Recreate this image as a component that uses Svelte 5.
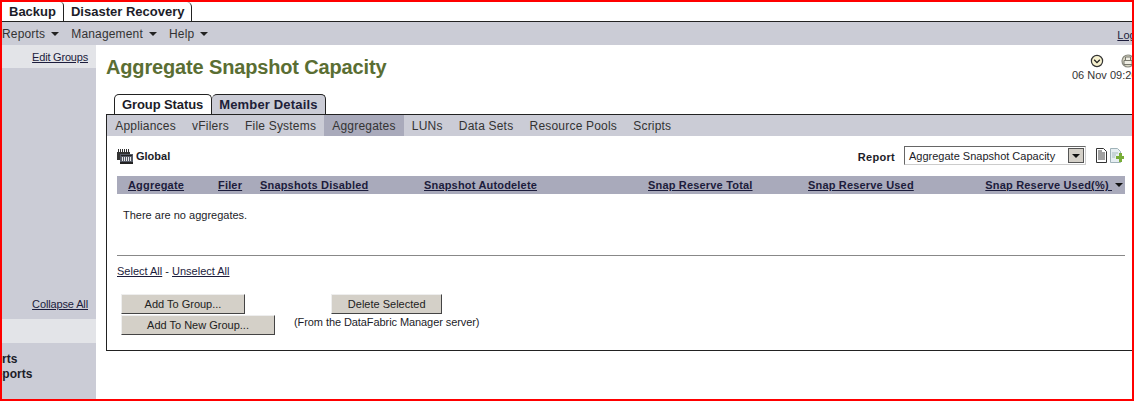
<script>
  const appTabs = ['Backup', 'Disaster Recovery'];
  const menus = ['Reports', 'Management', 'Help'];
  const subTabs = ['Appliances', 'vFilers', 'File Systems', 'Aggregates', 'LUNs', 'Data Sets', 'Resource Pools', 'Scripts'];
  const columns = [
    { label: 'Aggregate', width: 90 },
    { label: 'Filer', width: 42 },
    { label: 'Snapshots Disabled', width: 164 },
    { label: 'Snapshot Autodelete', width: 224 },
    { label: 'Snap Reserve Total', width: 160 },
    { label: 'Snap Reserve Used', width: 176 },
    { label: 'Snap Reserve Used(%)\u00a0', width: 0 }
  ];
</script>

<div class="frame">
  <div class="app-tabs">
    {#each appTabs as tab (tab)}
      <div class="app-tab">{tab}</div>
    {/each}
  </div>

  <div class="menu">
    <div class="menu-items">
      {#each menus as item (item)}
        <span class="menu-item">{item}<i class="caret"></i></span>
      {/each}
    </div>
    <a class="logout" href="#logout">Logout</a>
  </div>

  <div class="content">
    <aside class="sidebar">
      <div class="side-top"><a href="#edit">Edit Groups</a></div>
      <div class="side-tree"><a href="#collapse">Collapse All</a></div>
      <div class="side-band"></div>
      <div class="side-links">
        <div>Reports</div>
        <div class="indent">Reports</div>
      </div>
    </aside>

    <main class="main">
      <div class="title-row">
        <h1>Aggregate Snapshot Capacity</h1>
        <div class="stamp">
          <div class="stamp-icons">
            <svg width="14" height="14" viewBox="0 0 14 14">
              <circle cx="7" cy="7" r="5.6" fill="#f6f1cf" stroke="#333" stroke-width="1.2" />
              <path d="M4.2 5.8 7 8.6 9.8 5.8" fill="none" stroke="#222" stroke-width="1.3" />
            </svg>
            <svg width="14" height="14" viewBox="0 0 14 14">
              <circle cx="7" cy="7" r="6" fill="#d8d6c4" stroke="#8a8a80" stroke-width="1.2" />
              <path d="M4.5 6.5V3h5v3.5M3 6.5h8v4H3z" fill="#efeee4" stroke="#77776c" />
            </svg>
          </div>
          <div class="stamp-date">06 Nov 09:26</div>
        </div>
      </div>

      <div class="tabs">
        <div class="tab group">Group Status</div>
        <div class="tab active">Member Details</div>
      </div>

      <section class="panel">
        <nav class="sub-nav">
          {#each subTabs as tab (tab)}
            <span class:current={tab === 'Aggregates'}>{tab}</span>
          {/each}
        </nav>

        <div class="panel-body">
          <div class="scope-row">
            <div class="scope">
              <svg width="16" height="15" viewBox="0 0 16 15">
                <rect x="0" y="3" width="13" height="8" fill="#333" />
                <path d="M1 0h1v3H1zM3 0h1v3H3zM5 0h1v3H5zM7 0h1v3H7zM9 0h1v3H9zM11 0h1v3h-1z" fill="#333" />
                <rect x="3" y="5" width="13" height="10" fill="#555a66" />
                <rect x="4" y="6" width="11" height="1" fill="#222" />
                <path d="M5 8h1v4H5zM7 8h1v4H7zM9 8h1v4H9zM11 8h1v4h-1zM13 8h1v4h-1z" fill="#e8e8e8" />
                <rect x="3" y="13" width="13" height="2" fill="#222" />
              </svg>
              <b>Global</b>
            </div>
            <div class="report">
              <label for="report">Report</label>
              <div id="report" class="select">
                <span>Aggregate Snapshot Capacity</span>
                <i class="select-btn"><i class="caret dark"></i></i>
              </div>
              <svg width="11" height="15" viewBox="0 0 11 15">
                <path d="M.5.5h7l3 3v11H.5z" fill="#fff" stroke="#333" />
                <path d="M2 3h4M2 5h7M2 7h7M2 9h7M2 11h7" stroke="#444" />
              </svg>
              <svg width="14" height="15" viewBox="0 0 14 15">
                <path d="M.5.5h7l3 3v11H.5z" fill="#e6eef2" stroke="#9fb2b8" />
                <path d="M2 5h6M2 7h4M2 9h3" stroke="#a8babf" />
                <path d="M6 8h3V5h3v3h2v3h-2v3H9v-3H6z" fill="#78ad38" />
              </svg>
            </div>
          </div>

          <div class="table-head">
            {#each columns as col (col.label)}
              <a href="#sort" style={col.width ? `width: ${col.width}px` : ''} class:last={!col.width}>{col.label}</a>
            {/each}
            <i class="caret dark sort"></i>
          </div>

          <p class="empty">There are no aggregates.</p>

          <hr />

          <div class="select-links"><a href="#all">Select All</a> - <a href="#none">Unselect All</a></div>

          <div class="actions">
            <div class="group-btns">
              <button class="small">Add To Group...</button>
              <button class="wide">Add To New Group...</button>
            </div>
            <div class="delete-block">
              <button class="delete">Delete Selected</button>
              <span>(From the DataFabric Manager server)</span>
            </div>
          </div>
        </div>
      </section>
    </main>
  </div>
</div>

<style>
  :global(body) {
    margin: 0;
    background: #fff;
  }

  .frame {
    width: 1134px;
    height: 401px;
    box-sizing: border-box;
    border: 2px solid #f00;
    overflow: hidden;
    display: flex;
    flex-direction: column;
    font-family: "Liberation Sans", Arial, sans-serif;
    font-size: 11px;
    color: #1c1c28;
  }

  a {
    color: #1c1c3c;
  }

  .app-tabs {
    display: flex;
    height: 19px;
    flex: none;
    border-bottom: 1px solid #222;
  }

  .app-tab {
    padding: 2px 7px 0 7px;
    font-size: 13px;
    font-weight: bold;
    border-right: 1px solid #222;
    border-top-right-radius: 5px;
    line-height: 16px;
  }

  .app-tab:first-child {
    padding-left: 7px;
    padding-right: 7px;
    border-top-right-radius: 4px;
  }

  .menu {
    flex: none;
    height: 23px;
    background: #cbccd6;
    display: flex;
    justify-content: space-between;
    align-items: center;
    font-size: 12px;
  }

  .menu-items {
    display: flex;
    gap: 12px;
    padding-top: 1px;
    letter-spacing: 0.17px;
  }

  .menu-item {
    display: flex;
    align-items: center;
    gap: 6px;
    color: #333;
  }

  .caret {
    width: 0;
    height: 0;
    border: 4px solid transparent;
    border-top: 4px solid #222;
    border-bottom: 0;
    display: inline-block;
  }

  .caret.dark {
    border-top-color: #111;
  }

  .logout {
    white-space: nowrap;
    margin-right: -19px;
    padding-top: 2px;
    font-size: 11px;
  }

  .content {
    flex: 1;
    display: flex;
    min-height: 0;
  }

  .sidebar {
    width: 94px;
    flex: none;
    background: #cbccd6;
    display: flex;
    flex-direction: column;
  }

  .side-top {
    height: 23px;
    background: #e3e4e8;
    text-align: right;
    padding: 6px 8px 0 0;
    box-sizing: border-box;
    letter-spacing: -0.2px;
  }

  .side-tree {
    height: 251px;
    flex: none;
    padding-right: 8px;
    display: flex;
    justify-content: flex-end;
    align-items: flex-end;
    padding-bottom: 9px;
    box-sizing: border-box;
    letter-spacing: -0.13px;
  }

  .side-band {
    height: 24px;
    flex: none;
    background: #e3e4e8;
  }

  .side-links {
    font-size: 12px;
    font-weight: bold;
    line-height: 15px;
    margin-left: -30px;
    padding-top: 9px;
    white-space: nowrap;
  }

  .indent {
    margin-left: 15px;
  }

  .main {
    flex: 1;
    min-width: 0;
    padding-left: 10px;
  }

  .title-row {
    display: flex;
    justify-content: space-between;
    height: 49px;
  }

  h1 {
    margin: 10px 0 0;
    font-size: 20px;
    line-height: 24px;
    letter-spacing: -0.15px;
    color: #5a6e33;
  }

  .stamp {
    margin: 9px -30px 0 0;
    width: 90px;
    flex: none;
    font-size: 11px;
  }

  .stamp-icons {
    display: flex;
    gap: 17px;
    padding-left: 18px;
    height: 15px;
  }

  .stamp-date {
    line-height: 13px;
    white-space: nowrap;
    color: #333;
  }

  .tabs {
    display: flex;
    margin-left: 8px;
    height: 20px;
  }

  .tab {
    font-size: 13px;
    font-weight: bold;
    padding: 2px 7px 0 7px;
    line-height: 16px;
    border: 1px solid #222;
    border-bottom: 0;
    border-radius: 5px 5px 0 0;
    box-sizing: border-box;
    letter-spacing: 0.17px;
  }

  .tab.group {
    padding: 2px 8px 0 7px;
    letter-spacing: -0.1px;
  }

  .tab.active {
    background: #cbccd6;
    color: #202038;
    border-left: 0;
  }

  .panel {
    width: 1026px;
    height: 237px;
    box-sizing: border-box;
    border: 1px solid #222;
    border-right: 0;
  }

  .sub-nav {
    display: flex;
    height: 21px;
    background: #cbccd6;
    font-size: 12px;
    letter-spacing: 0.2px;
  }

  .sub-nav span {
    padding: 4px 8px 0 8.2px;
    color: #333;
  }

  .sub-nav .current {
    background: #a9aabb;
  }

  .panel-body {
    padding: 0 7px 0 10px;
  }

  .scope-row {
    display: flex;
    justify-content: space-between;
    height: 40px;
    align-items: center;
  }

  .scope {
    display: flex;
    gap: 3px;
    align-items: center;
  }

  .report {
    display: flex;
    align-items: center;
    gap: 3px;
    padding: 0 1px 1px 0;
  }

  .report label {
    font-weight: bold;
    letter-spacing: 0.3px;
    margin: 2px 6px 0 0;
  }

  .select {
    width: 182px;
    height: 19px;
    box-sizing: border-box;
    border: 1px solid;
    border-color: #666 #ccc #ccc #666;
    display: flex;
    justify-content: space-between;
    align-items: center;
    padding: 0 1px 0 4px;
    margin-right: 7px;
  }

  .select-btn {
    width: 16px;
    height: 15px;
    background: #d4d0c8;
    border: 1px solid #555;
    box-sizing: border-box;
    display: flex;
    align-items: center;
    justify-content: center;
  }

  .table-head {
    display: flex;
    align-items: center;
    height: 18px;
    background: #a9aabb;
    padding-left: 11px;
    font-weight: bold;
    letter-spacing: 0.18px;
  }

  .table-head a {
    flex: none;
  }

  .table-head .last {
    margin-left: auto;
  }

  .sort {
    margin: 0 2px 0 3px;
  }

  .empty {
    margin: 15px 0 0 6px;
    line-height: 13px;
    height: 46px;
  }

  hr {
    margin: 0;
    border: 0;
    border-top: 1px solid #888;
  }

  .select-links {
    margin-top: 9px;
  }

  .actions {
    display: flex;
    margin-top: 17px;
    margin-left: 4px;
    gap: 19px;
  }

  .group-btns {
    display: flex;
    flex-direction: column;
    gap: 1px;
  }

  button {
    font: inherit;
    height: 20px;
    background: #d4d0c8;
    border: 1px solid;
    border-color: #eee #444 #444 #eee;
    padding: 0;
    color: #222;
  }

  .small {
    width: 124px;
  }

  .wide {
    width: 154px;
  }

  .delete-block {
    display: flex;
    flex-direction: column;
    align-items: center;
    gap: 2px;
    letter-spacing: -0.08px;
  }

  .delete {
    width: 111px;
  }
</style>
